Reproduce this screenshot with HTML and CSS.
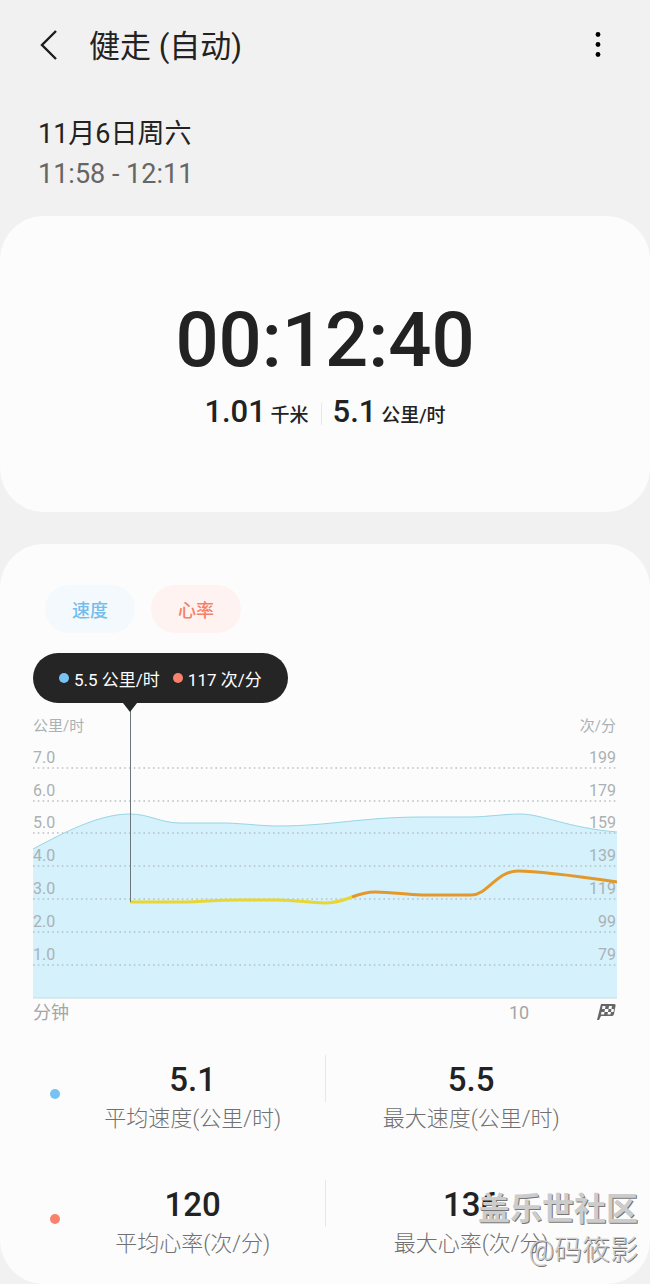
FILE: index.html
```html
<!DOCTYPE html>
<html lang="zh-CN">
<head>
  <meta charset="UTF-8" />
  <meta name="viewport" content="width=device-width, initial-scale=1.0"/>
  <title>健走 (自动)</title>

  <link rel="stylesheet" href="styles.css">
</head>
<body>

  <header class="topbar">
    <button type="button" class="iconBtn" aria-label="返回">
      <svg width="20" height="30" viewBox="0 0 20 30">
        <path d="M18 1 L4 15 L18 29" fill="none" stroke="#1c1c1c" stroke-width="2.4" />
      </svg>
    </button>
    <h1>健走 (自动)</h1>
    <button type="button" class="iconBtn" aria-label="更多">
      <svg width="20" height="30" viewBox="0 0 20 30">
        <circle cx="10" cy="4.5" r="2.4" />
        <circle cx="10" cy="14.5" r="2.4" />
        <circle cx="10" cy="24.5" r="2.4" />
      </svg>
    </button>
  </header>

  <div class="dateBlock">
    <div>11月6日周六</div>
    <div class="period">11:58 - 12:11</div>
  </div>

  <main>
    <section class="card summary">
      <div class="timer">00:12:40</div>
      <div class="totals">
        <div><b>1.01</b> 千米</div>
        <div><b>5.1</b> 公里/时</div>
      </div>
    </section>

    <section class="card details">
      <div class="chips">
        <button type="button" class="chip speed">速度</button>
        <button type="button" class="chip heart">心率</button>
      </div>

      <div class="tooltip">
        <span class="dot blue"></span><span>5.5 公里/时</span>
        <span class="dot red"></span><span>117 次/分</span>
      </div>

      <svg class="chart" viewBox="0 0 584 320">
        <!-- speed -->
        <path class="area" d="M0 146 C32 129 66 111 97 111 C116 111 128 120 147 120 L194 120 C216 121 230 123 245 123 C297 123 330 114 389 114 L438 114 C452 114 472 111 487 111 C509 111 535 125 584 129 L584 295 L0 295 Z" />
        <path class="areaLine" d="M0 146 C32 129 66 111 97 111 C116 111 128 120 147 120 L194 120 C216 121 230 123 245 123 C297 123 330 114 389 114 L438 114 C452 114 472 111 487 111 C509 111 535 125 584 129" />

        <g class="grid">
          <path d="M0 65 H584" />
          <path d="M0 98 H584" />
          <path d="M0 130 H584" />
          <path d="M0 163 H584" />
          <path d="M0 196 H584" />
          <path d="M0 229 H584" />
          <path d="M0 262 H584" />
        </g>
        <path class="base" d="M0 295 H584" />

        <g class="axis">
          <text x="0" y="28">公里/时</text>
          <text x="0" y="60">7.0</text>
          <text x="0" y="93">6.0</text>
          <text x="0" y="125">5.0</text>
          <text x="0" y="158">4.0</text>
          <text x="0" y="191">3.0</text>
          <text x="0" y="224">2.0</text>
          <text x="0" y="257">1.0</text>
        </g>
        <g class="axis right">
          <text x="583" y="28">次/分</text>
          <text x="583" y="60">199</text>
          <text x="583" y="93">179</text>
          <text x="583" y="125">159</text>
          <text x="583" y="158">139</text>
          <text x="583" y="191">119</text>
          <text x="583" y="224">99</text>
          <text x="583" y="257">79</text>
        </g>

        <!-- heart rate -->
        <path class="heartLine low" d="M97 199 L155 199 C175 198 185 197 205 197 L245 197 C265 197 275 200 292 200 C305 200 310 197 319 194" />
        <path class="heartLine" d="M319 194 C330 190 334 189 342 189 C362 189 372 192 389 192 L438 192 C455 192 463 168 485 168 C510 168 550 174 584 179" />
        <path class="cursor" d="M97.5 0 V199" />

        <g class="minutes">
          <text x="0" y="316">分钟</text>
          <text x="476" y="316">10</text>
        </g>

        <!-- finish flag -->
        <g transform="translate(564 300)">
          <path d="M4 1 H17 Q19 1 18.500 3 L17 11 Q16.500 13 15 13 H4 L2 17 H0 Z" fill="#666" />
          <path d="M5.500 3 H8.500 L8 6 H5 Z M12 3 H15 L14.500 6 H11.500 Z M8 6 H11.500 L11 9 H7.500 Z M4.500 9 H7.500 L7 11.500 H4 Z M11 9 H14 L13.500 11.500 H10.500 Z M14.500 6 H17 L16.500 9 H14 Z" fill="#fcfcfc" />
        </g>
      </svg>

      <div class="stats">
        <span class="dot blue"></span>
        <div class="stat"><b>5.1</b><span>平均速度(公里/时)</span></div>
        <div class="stat"><b>5.5</b><span>最大速度(公里/时)</span></div>
      </div>
      <div class="stats">
        <span class="dot red"></span>
        <div class="stat"><b>120</b><span>平均心率(次/分)</span></div>
        <div class="stat"><b>136</b><span>最大心率(次/分)</span></div>
      </div>

      <div class="watermark">
        <strong>盖乐世社区</strong>
        <span>@码筱影</span>
      </div>
    </section>
  </main>

</body>
</html>
```
FILE: styles.css
```css
* {
  box-sizing: border-box;
}

body {
  margin: 0;
  background-color: #f1f1f1;
  color: #222;
  font-family: Roboto, "Noto Sans CJK SC", sans-serif;
}

button {
  border: none;
  padding: 0;
  font-family: inherit;
  cursor: pointer;
}

.topbar {
  display: flex;
  align-items: center;
  height: 90px;
  padding: 0 42px 0 38px;
}

.topbar h1 {
  flex: 1;
  margin: 0 0 0 31px;
  padding-top: 4px;
  font-size: 31px;
  font-weight: normal;
  line-height: 40px;
}

.iconBtn {
  width: 20px;
  height: 30px;
  background: none;
}

.iconBtn svg {
  display: block;
}

.dateBlock {
  padding: 24px 38px 22px;
  font-size: 27px;
  line-height: 40px;
}

.period {
  color: #666;
}

.card {
  background-color: #fcfcfc;
  border-radius: 44px;
}

.summary {
  height: 296px;
  padding-top: 80px;
  margin-bottom: 32px;
  text-align: center;
}

.timer {
  font-size: 76px;
  font-weight: 500;
  line-height: 88px;
}

.totals {
  display: flex;
  justify-content: center;
  margin-top: 8px;
  font-size: 19px;
  font-weight: 500;
  line-height: 40px;
}

.totals b {
  font-size: 31px;
  font-weight: 500;
}

.totals div {
  padding: 0 12px;
}

.totals div + div {
  background: linear-gradient(#e8e8e8, #e8e8e8) left center / 1px 22px no-repeat;
}

.details {
  position: relative;
  padding: 41px 33px 16px;
}

.chips {
  display: flex;
  gap: 16px;
  padding-left: 12px;
}

.chip {
  width: 90px;
  height: 48px;
  border-radius: 24px;
  font-size: 18px;
  font-weight: 500;
}

.speed {
  background-color: #f3f9fd;
  color: #74bdeb;
}

.heart {
  background-color: #fff3f2;
  color: #f58068;
}

.tooltip {
  position: relative;
  display: flex;
  align-items: center;
  width: 255px;
  height: 50px;
  margin-top: 20px;
  padding-left: 26px;
  border-radius: 25px;
  background-color: #252525;
  color: #fff;
  font-size: 17px;
  white-space: nowrap;
}

.tooltip::after {
  content: "";
  position: absolute;
  top: 100%;
  left: 90px;
  border: 7px solid transparent;
  border-top: 9px solid #252525;
  border-bottom: none;
}

.dot {
  width: 10px;
  height: 10px;
  border-radius: 50%;
}

.tooltip .dot {
  margin-right: 5px;
}

.tooltip span + .dot {
  margin-left: 13px;
}

.blue {
  background-color: #77c1f5;
}

.red {
  background-color: #fa816c;
}

.chart {
  display: block;
  width: 100%;
}

.area {
  fill: #d4f1fc;
}

.areaLine {
  fill: none;
  stroke: #98d5e5;
  stroke-width: 1;
}

.grid path {
  stroke: #b7c1c5;
  stroke-width: 1.4;
  stroke-dasharray: 1.6 3.2;
}

.base {
  stroke: #c5dce4;
}

.axis {
  fill: #aab1b4;
  font-size: 16px;
}

.axis text:first-child {
  font-size: 15px;
}

.right {
  text-anchor: end;
}

.minutes {
  fill: #a5a5a5;
  font-size: 18px;
}

.heartLine {
  fill: none;
  stroke: #e5982a;
  stroke-width: 3;
}

.low {
  stroke: #ead631;
}

.cursor {
  stroke: #6b777b;
  stroke-width: 1;
}

.stats {
  display: grid;
  grid-template-columns: 27px 10fr 11fr;
  align-items: center;
  margin-top: 32px;
}

.stats .dot {
  margin-left: 17px;
  margin-top: -10px;
}

.stats + .stats {
  margin-top: 37px;
}

.stat {
  display: flex;
  flex-direction: column;
  align-items: center;
  height: 88px;
  padding-top: 3px;
}

.stat + .stat {
  background: linear-gradient(#e8e8e8, #e8e8e8) left top / 1px 47px no-repeat;
}

.stat b {
  font-size: 33px;
  font-weight: 500;
  line-height: 44px;
}

.stat span {
  color: #707070;
  font-size: 22px;
  font-weight: 300;
  line-height: 34px;
}

.watermark {
  position: absolute;
  right: 12px;
  bottom: 13px;
  display: flex;
  flex-direction: column;
  align-items: flex-end;
  color: #ccc;
  text-shadow: 1px 1px 0 #777;
}

.watermark strong {
  font-size: 32px;
  line-height: 44px;
}

.watermark span {
  font-size: 28px;
  font-weight: 300;
  line-height: 40px;
}
```
